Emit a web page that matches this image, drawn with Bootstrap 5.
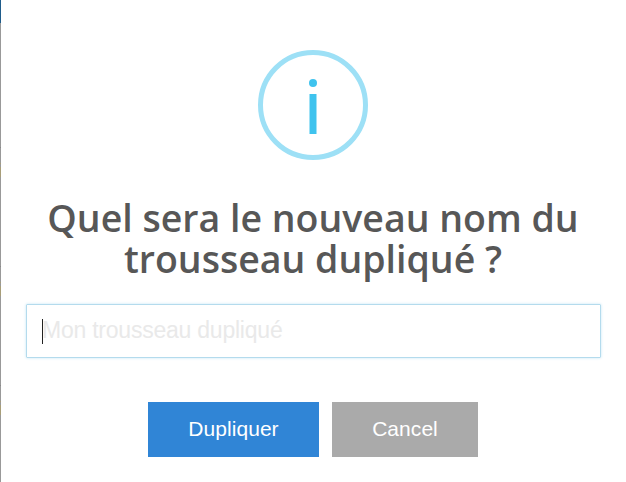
<!DOCTYPE html>
<html lang="fr">
<head>
<meta charset="utf-8">
<meta name="viewport" content="width=device-width, initial-scale=1">
<title>Dupliquer le trousseau</title>
<link href="https://cdn.jsdelivr.net/npm/bootstrap@5.3.0/dist/css/bootstrap.min.css" rel="stylesheet">
<style>
body{height:482px;overflow:hidden;background:#fff;font-family:"Liberation Sans",Arial,sans-serif}
.edge{width:1px;background:linear-gradient(#1f5c8b 0 23px,transparent 23px),repeating-linear-gradient(#999 0 28px,#888 28px 29px,#999 29px 44px,#a89e78 44px 45px,#999 45px 48px,#a89e78 48px 58px,#999 58px 119px) 0 119px/1px 363px no-repeat,#999}
.dialog-body{min-width:0;padding:50px 26px 0 25px}
.info-ring{width:110px;height:110px}
.dialog-title{font:600 37.5px/41px "Open Sans",sans-serif;color:#575757;margin:37px 0 0}
.name-field{height:54px;margin:25px -1px 0 0;border:1px solid #b4dbed;border-radius:1px;box-shadow:0 0 3px #c4e6f5;padding:0 15px 2px;font-size:23px;letter-spacing:-.23px;color:#e9e9e9}
.caret{width:1px;height:25px;margin-right:-1px;background:#222;position:relative;top:1px}
.actions{margin-top:44px;gap:13px}
.btn-dialog{height:55px;border:0;border-radius:0;color:#fff;font-size:21px;letter-spacing:.05px;padding:0 0 2px}
.btn-go{width:171px;background:#3085d6}
.btn-stop{width:146px;background:#aaa}
</style>
</head>
<body class="d-flex">
<div class="edge flex-shrink-0"></div>
<main class="dialog-body flex-grow-1 text-center">
<svg class="info-ring d-block mx-auto" viewBox="0 0 110 110"><circle cx="55" cy="55" r="52.5" fill="none" stroke="#9de0f6" stroke-width="5"/><circle cx="55" cy="33" r="4" fill="#3fc3ee"/><rect x="51.5" y="44" width="7" height="40" fill="#3fc3ee"/></svg>
<h2 class="dialog-title"><span class="d-block">Quel sera le nouveau nom du</span><span class="d-block">trousseau dupliqué ?</span></h2>
<div class="name-field d-flex align-items-center"><span class="caret"></span><span>Mon trousseau dupliqué</span></div>
<div class="actions d-flex justify-content-center"><button type="button" class="btn btn-dialog btn-go">Dupliquer</button><button type="button" class="btn btn-dialog btn-stop">Cancel</button></div>
</main>
<script src="https://cdn.jsdelivr.net/npm/bootstrap@5.3.0/dist/js/bootstrap.bundle.min.js"></script>
</body>
</html>
